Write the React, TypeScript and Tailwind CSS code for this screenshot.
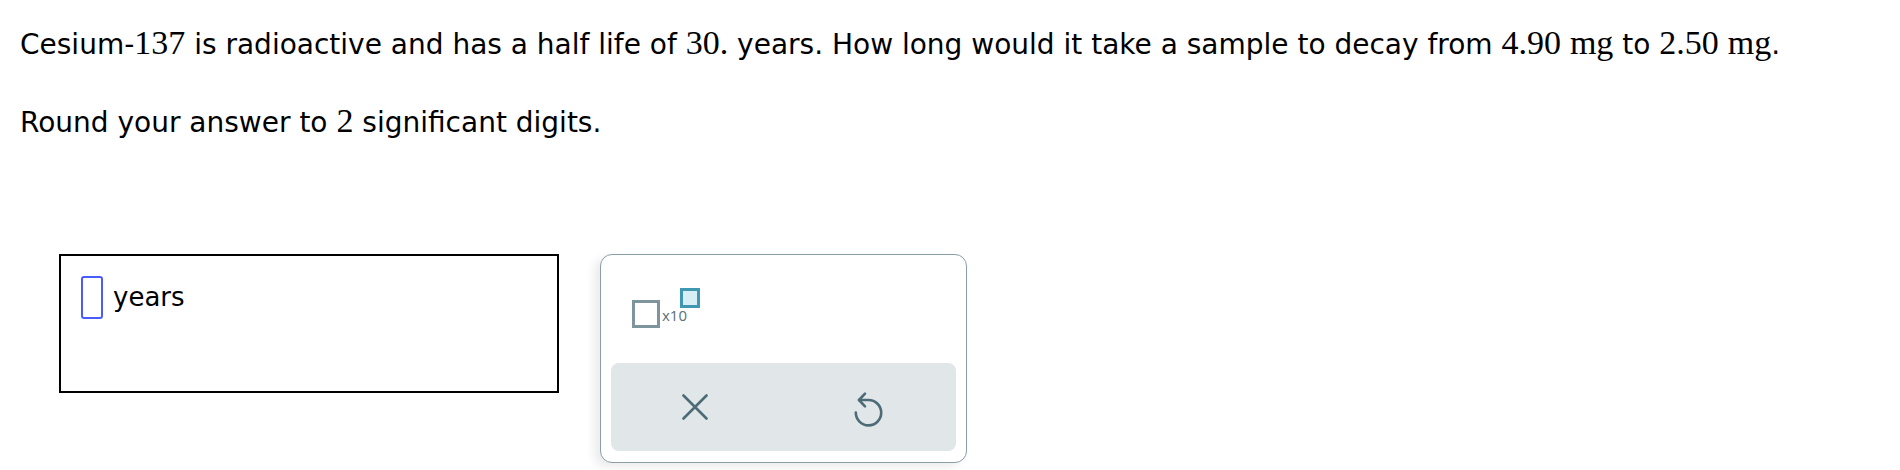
import React from 'react';

const M: React.FC<{ children: React.ReactNode }> = ({ children }) => (
  <span className="font-['Liberation_Serif',serif] text-[34px] leading-[40px]">{children}</span>
);

const CloseIcon = () => (
  <svg width="26" height="26" viewBox="0 0 26 26" fill="none" stroke="#4d6b77" strokeWidth="2.6" strokeLinecap="round">
    <path d="M1.5 1.5 24.5 24.5M24.5 1.5 1.5 24.5" />
  </svg>
);

const UndoIcon = () => (
  <svg width="34" height="40" viewBox="0 0 34 40" fill="none" stroke="#4d6b77" strokeWidth="2.6" strokeLinecap="round" strokeLinejoin="round">
    <path d="M8 11H17.5A12.7 12.7 0 1 1 4.8 23.6" />
    <path d="M14 4.7 8 11l6 6.3" />
  </svg>
);

export default function App() {
  return (
    <div className="min-h-[470px] bg-white text-black font-['DejaVu_Sans',Verdana,sans-serif]">
      <div className="pl-[20px] pt-[23px]">
        <p className="text-[28px] leading-[40px]">
          Cesium-<M>137</M> is radioactive and has a half life of <M>30.</M> years. How long would it take a sample to decay from <M>4.90</M> <M>mg</M> to <M>2.50</M> <M>mg</M>.
        </p>
        <p className="mt-[36px] text-[28px] leading-[40px]">
          Round your answer to <M>2</M> significant digits.
        </p>
      </div>

      <div className="mt-[111px] flex items-start">
        {/* answer box */}
        <div className="ml-[59px] w-[500px] h-[139px] border-2 border-black px-[20px] pt-[20px]">
          <div className="flex items-center gap-[10px]">
            <div className="w-[22px] h-[43px] rounded-[3px] border-2 border-[#4a5bff]" />
            <span className="text-[26px]">years</span>
          </div>
        </div>

        {/* tool panel */}
        <div className="ml-[41px] w-[367px] h-[209px] rounded-[12px] border-[1.5px] border-[#8a9ea6] bg-white shadow-[-6px_4px_10px_rgba(0,0,0,0.08)] px-[10px] flex flex-col">
          <div className="h-[108px] pl-[21px] pt-[33px]">
            <div className="flex items-start">
              <div className="mt-[12px] w-[28px] h-[28px] border-[3px] border-[#7f959e]" />
              <div className="flex flex-col">
                <div className="ml-[20px] w-[20px] h-[20px] border-[3px] border-[#3f97b1] bg-[#d6eef4]" />
                <span className="ml-[2px] -mt-[1px] text-[15px] leading-[16px] text-[#5b6f79] font-['Open_Sans',sans-serif]">x10</span>
              </div>
            </div>
          </div>
          <div className="h-[88px] rounded-[8px] bg-[#e1e6e9] flex items-center justify-around">
            <CloseIcon />
            <div className="mt-[4px]">
              <UndoIcon />
            </div>
          </div>
        </div>
      </div>
    </div>
  );
}
